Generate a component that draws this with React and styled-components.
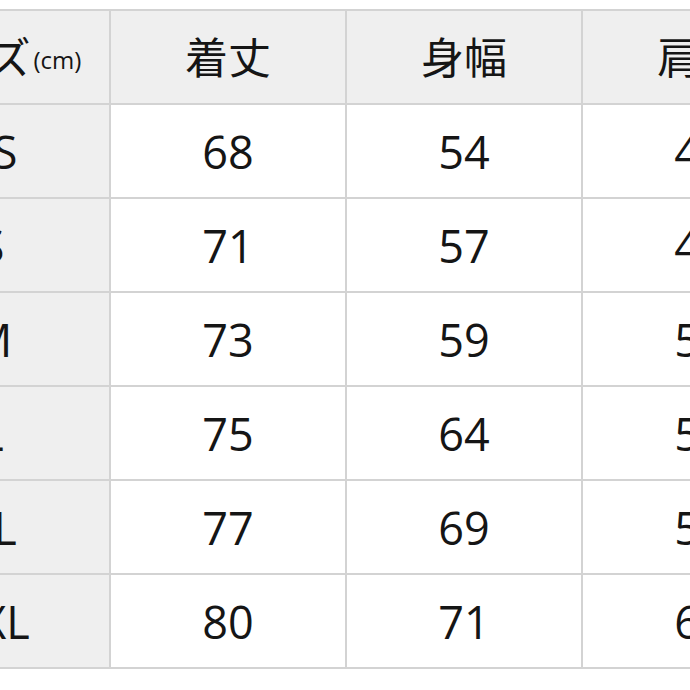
import React from 'react';
import styled, { createGlobalStyle } from 'styled-components';

const GlobalStyle = createGlobalStyle`
  html, body {
    margin: 0;
    padding: 0;
    background: #ffffff;
    overflow: hidden;
  }
  body {
    font-family: "Open Sans", "Noto Sans CJK JP", sans-serif;
    color: #151515;
  }
`;

const Page = styled.div`
  width: 690px;
  height: 690px;
  padding-top: 9px;
  box-sizing: border-box;
  overflow: hidden;
`;

const Grid = styled.div`
  display: grid;
  grid-template-columns: repeat(4, 234px);
  grid-auto-rows: 92px;
  gap: 2px;
  width: fit-content;
  margin-left: -127px;
  background: #d3d3d3;
  border: 2px solid #d3d3d3;
`;

const Cell = styled.div`
  display: flex;
  align-items: center;
  justify-content: center;
  background: ${p => (p.$shaded ? '#efefef' : '#ffffff')};
  font-size: ${p => (p.$head ? '43px' : '45px')};
  line-height: 1;
  white-space: nowrap;
`;

const Unit = styled.span`
  font-size: 24px;
  margin-left: 3px;
  margin-top: 6px;
`;

const sizes = [
  ['XS', 68, 54, 46],
  ['S', 71, 57, 48],
  ['M', 73, 59, 50],
  ['L', 75, 64, 52],
  ['XL', 77, 69, 56],
  ['XXL', 80, 71, 60],
];

const heads = ['着丈', '身幅', '肩幅'];

export default function App() {
  return (
    <Page>
      <GlobalStyle />
      <Grid>
        <Cell $shaded $head>
          サイズ<Unit>(cm)</Unit>
        </Cell>
        {heads.map(h => (
          <Cell key={h} $shaded $head>{h}</Cell>
        ))}
        {sizes.map(([name, ...vals]) => (
          <React.Fragment key={name}>
            <Cell $shaded>{name}</Cell>
            {vals.map((v, i) => (
              <Cell key={i}>{v}</Cell>
            ))}
          </React.Fragment>
        ))}
      </Grid>
    </Page>
  );
}
